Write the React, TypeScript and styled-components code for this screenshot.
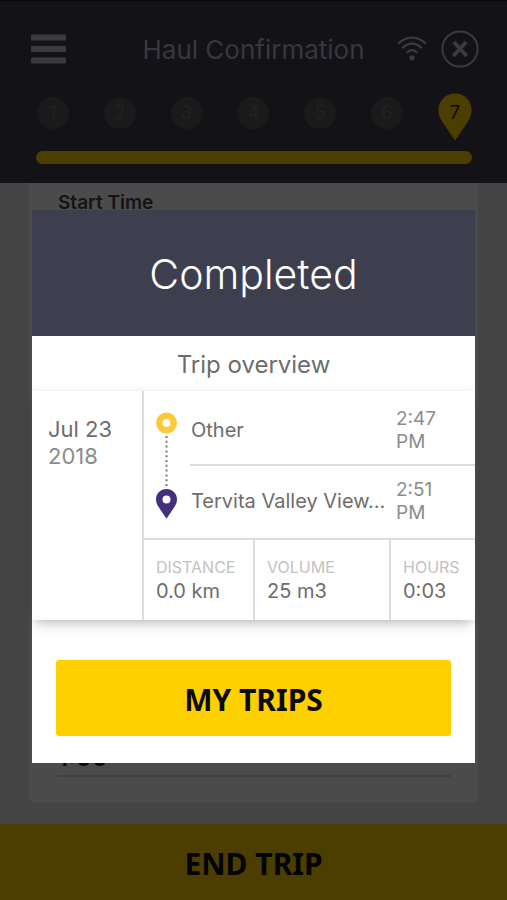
import React from "react";
import styled, { createGlobalStyle } from "styled-components";

const GlobalStyle = createGlobalStyle`
  *, *::before, *::after { box-sizing: border-box; }
  body {
    margin: 0;
    background: #e4e4e4;
    color: #6d6d6d;
    font-family: Inter, "Liberation Sans", sans-serif;
  }
  h1, h2, h3, p, ol, dl, dd { margin: 0; padding: 0; font-weight: 400; }
  button { font: inherit; color: inherit; border: 0; cursor: pointer; }
`;

const Page = styled.div`
  display: flex;
  flex-direction: column;
  min-height: 100vh;
`;

const Header = styled.header`
  padding: 28px 28px 19px;
  background: #3c3f4f;
  border-top: 1px solid #1c1d28;
`;

const Toolbar = styled.div`
  display: flex;
  align-items: center;
  height: 40px;
`;

const IconButton = styled.button`
  display: flex;
  padding: 0;
  background: none;
  color: #c6c6cc;
`;

const Title = styled.h1`
  flex: 1;
  padding: 2px 0 0 42px;
  text-align: center;
  font-size: 26px;
  line-height: 40px;
  white-space: nowrap;
  color: #b9bac2;
`;

const ToolbarEnd = styled.div`
  display: flex;
  align-items: center;
  gap: 14px;
  color: #c6c6cc;
`;

const Steps = styled.ol`
  display: flex;
  justify-content: space-between;
  margin: 24px 7px 0 9px;
  list-style: none;
`;

const Step = styled.li`
  width: 32px;
  height: 32px;
  margin-top: 4px;
  border-radius: 50%;
  background: #585858;
  color: #737373;
  text-align: center;
  font-size: 18px;
  line-height: 32px;
`;

const CurrentStep = styled.li`
  display: grid;
  width: 34px;
  height: 48px;
  color: #2b2600;
  text-align: center;
  font-size: 19px;
  line-height: 40px;

  > * { grid-area: 1 / 1; }
`;

const ProgressBar = styled.div`
  height: 13px;
  margin: 10px 7px 0 8px;
  border-radius: 7px;
  background: #ffd000;
`;

const Content = styled.main`
  display: flex;
  flex: 1;
  padding: 0 29px 21px;
`;

const FormCard = styled.section`
  display: flex;
  flex: 1;
  flex-direction: column;
  justify-content: space-between;
  padding: 8px 27px 26px 29px;
  border-radius: 0 0 6px 6px;
  background: #fcfcfc;
`;

const FieldLabel = styled.h2`
  font-size: 19px;
  font-weight: 600;
  line-height: 24px;
  color: #42434c;
`;

const FieldValue = styled.p`
  padding-bottom: 3px;
  border-bottom: 2px solid #d8d8d8;
  font-size: 24px;
  font-weight: 600;
  line-height: 28px;
  color: #222222;
`;

const ActionButton = styled.button<{ $inset?: boolean }>`
  height: 76px;
  margin: ${(p) => (p.$inset ? "0 24px" : "0")};
  padding: 3px 0 0;
  border-radius: ${(p) => (p.$inset ? "3px" : "0")};
  background: #ffd000;
  color: #0a0a0a;
  font-family: "Noto Sans", "Open Sans", sans-serif;
  font-size: 30px;
  font-weight: 700;
`;

const Overlay = styled.div`
  position: fixed;
  inset: 0;
  padding: 210px 32px 0;
  background: rgba(0, 0, 0, 0.7);
`;

const Modal = styled.section`
  display: flex;
  flex-direction: column;
  padding-bottom: 27px;
  background: #ffffff;
`;

const ModalTitle = styled.h2`
  padding: 38px 0 36px;
  background: #3d3f4e;
  color: #ffffff;
  text-align: center;
  font-size: 41px;
  font-weight: 300;
  line-height: 52px;
`;

const Subtitle = styled.h3`
  padding-top: 2px;
  text-align: center;
  font-size: 24px;
  line-height: 53px;
`;

const TripCard = styled.article`
  display: grid;
  grid-template-columns: 110px 1fr;
  margin-bottom: 40px;
  box-shadow: 0 0 8px rgba(0, 0, 0, 0.08), 0 8px 12px -4px rgba(0, 0, 0, 0.22);
`;

const TripDate = styled.div`
  padding: 25px 16px;
  font-size: 22px;
  line-height: 27px;
`;

const Year = styled.div`
  color: #8c8c8c;
`;

const TripBody = styled.div`
  min-width: 0;
  border-left: 2px solid #dcdcdc;
`;

const Route = styled.div`
  display: grid;
  grid-template-columns: 21px 1fr;
  gap: 13px;
  padding-left: 12px;
`;

const RouteLine = styled.div`
  height: 147px;
  padding-top: 21px;
`;

const Stops = styled.div`
  display: grid;
  grid-template-rows: 73px 74px;
  min-width: 0;
`;

const Stop = styled.div`
  display: grid;
  grid-template-columns: 1fr 79px;
  gap: 8px;
  align-items: center;
  padding-top: 5px;

  & + & {
    border-top: 2px solid #dcdcdc;
    padding: 0 0 3px;
  }
`;

const Place = styled.div`
  padding-left: 1px;
  overflow: hidden;
  white-space: nowrap;
  text-overflow: ellipsis;
  font-size: 20px;
  line-height: 28px;
`;

const Time = styled.div`
  width: 50px;
  font-size: 19px;
  line-height: 23px;
  color: #8c8c8c;
`;

const Stats = styled.dl`
  display: grid;
  grid-template-columns: 109px 136px 1fr;
  border-top: 2px solid #dcdcdc;
`;

const Stat = styled.div`
  padding: 15px 0 17px 12px;

  & + & { border-left: 2px solid #dcdcdc; }
`;

const StatLabel = styled.dt`
  font-size: 16px;
  line-height: 24px;
  color: #c2c2c2;
`;

const StatValue = styled.dd`
  font-size: 20px;
  line-height: 24px;
`;

const MenuIcon = () => (
  <svg width="40" height="32" viewBox="0 0 40 32" fill="currentColor" aria-hidden="true">
    <rect x="3" y="1.5" width="35" height="6" rx="1" />
    <rect x="3" y="13" width="35" height="6" rx="1" />
    <rect x="3" y="24.5" width="35" height="6" rx="1" />
  </svg>
);

const WifiIcon = () => (
  <svg width="30" height="26" viewBox="0 0 30 26" fill="none" stroke="currentColor" strokeWidth="2.3" aria-hidden="true">
    <path d="M1.200 7.800C9 -0.400 21 -0.400 28.800 7.800" />
    <path d="M5.400 12.200C11 6.200 19 6.200 24.600 12.200" />
    <path d="M9.700 16.700C12.800 13.300 17.200 13.300 20.300 16.700" />
    <circle cx="15" cy="21.800" r="2.600" fill="currentColor" stroke="none" />
  </svg>
);

const CloseIcon = () => (
  <svg width="38" height="38" viewBox="0 0 38 38" fill="none" stroke="currentColor" aria-hidden="true">
    <circle cx="19" cy="19" r="17.6" strokeWidth="2" />
    <path d="M12.800 12 25.600 26M25.200 12 12.400 26" strokeWidth="3.800" />
  </svg>
);

const StepPin = () => (
  <svg width="34" height="48" viewBox="0 0 34 48" aria-hidden="true">
    <path d="M17 0.5C7.6 0.5 0.4 8 0.4 17.2c0 5 2 8.600 4.400 12.400L17 47.500l12.200-17.900c2.400-3.800 4.400-7.400 4.400-12.400C33.600 8 26.400 0.500 17 0.500z" fill="#ffd000" />
  </svg>
);

const RouteIcon = () => (
  <svg width="21" height="108" viewBox="0 0 21 108" fill="none" aria-hidden="true">
    <circle cx="10.500" cy="11" r="7.200" stroke="#f9cb3c" strokeWidth="6.600" />
    <path d="M10.500 24V75" stroke="#777777" strokeWidth="2" strokeDasharray="2 2.800" />
    <path
      d="M10.500 77C4.600 77 0 81.600 0 87.400c0 3.300 1.300 5.600 3 8.200l7.500 11.100 7.500-11.100c1.700-2.600 3-4.900 3-8.200C21 81.600 16.400 77 10.500 77zm0 6.600a4 4 0 1 1 0 8 4 4 0 0 1 0-8z"
      fill="#452f7d"
    />
  </svg>
);

const stops = [
  { place: "Other", time: "2:47 PM" },
  { place: "Tervita Valley View...", time: "2:51 PM" },
];

const stats = [
  { label: "DISTANCE", value: "0.0 km" },
  { label: "VOLUME", value: "25 m3" },
  { label: "HOURS", value: "0:03" },
];

export default function App() {
  return (
    <>
      <GlobalStyle />
      <Page>
        <Header>
          <Toolbar>
            <IconButton aria-label="Menu"><MenuIcon /></IconButton>
            <Title>Haul Confirmation</Title>
            <ToolbarEnd>
              <WifiIcon />
              <IconButton aria-label="Close"><CloseIcon /></IconButton>
            </ToolbarEnd>
          </Toolbar>
          <Steps>
            {[1, 2, 3, 4, 5, 6].map((n) => <Step key={n}>{n}</Step>)}
            <CurrentStep aria-current="step"><StepPin /><span>7</span></CurrentStep>
          </Steps>
          <ProgressBar />
        </Header>
        <Content>
          <FormCard>
            <FieldLabel>Start Time</FieldLabel>
            <FieldValue>1:00</FieldValue>
          </FormCard>
        </Content>
        <ActionButton>END TRIP</ActionButton>
      </Page>
      <Overlay>
        <Modal role="dialog" aria-modal="true" aria-labelledby="modal-title">
          <ModalTitle id="modal-title">Completed</ModalTitle>
          <Subtitle>Trip overview</Subtitle>
          <TripCard>
            <TripDate>
              <div>Jul 23</div>
              <Year>2018</Year>
            </TripDate>
            <TripBody>
              <Route>
                <RouteLine><RouteIcon /></RouteLine>
                <Stops>
                  {stops.map((s) => (
                    <Stop key={s.place}>
                      <Place>{s.place}</Place>
                      <Time>{s.time}</Time>
                    </Stop>
                  ))}
                </Stops>
              </Route>
              <Stats>
                {stats.map((s) => (
                  <Stat key={s.label}>
                    <StatLabel>{s.label}</StatLabel>
                    <StatValue>{s.value}</StatValue>
                  </Stat>
                ))}
              </Stats>
            </TripBody>
          </TripCard>
          <ActionButton $inset>MY TRIPS</ActionButton>
        </Modal>
      </Overlay>
    </>
  );
}
